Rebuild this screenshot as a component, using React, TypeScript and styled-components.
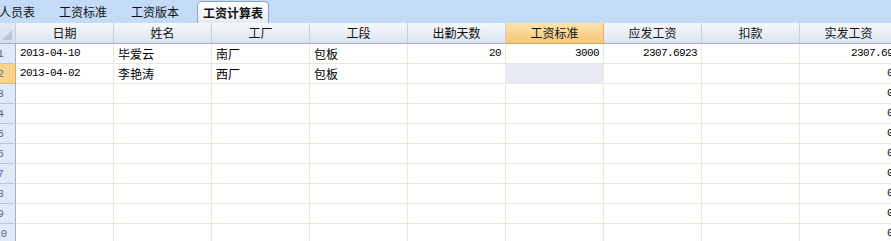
import styled, { createGlobalStyle } from "styled-components";

const Global = createGlobalStyle`
    html, body {
        margin: 0;
        padding: 0;
        background: #fff;
        overflow: hidden;
    }
    body {
        font-family: "Noto Sans CJK SC", "Liberation Sans", sans-serif;
        font-size: 12px;
        color: #000;
    }
`;

const Sheet = styled.div`
    margin-left: -14px;
    width: 920px;
`;

const TabBar = styled.div`
    display: flex;
    align-items: flex-end;
    height: 23px;
    padding-left: 1px;
    background: #c3dbf7;
`;

const Tab = styled.div<{ $active?: boolean }>`
    box-sizing: border-box;
    height: ${(p) => (p.$active ? "22px" : "23px")};
    padding: ${(p) => (p.$active ? "1px 5px 0" : "0 12px")};
    margin-left: ${(p) => (p.$active ? "6px" : "0")};
    display: flex;
    align-items: center;
    justify-content: center;
    font-weight: ${(p) => (p.$active ? "bold" : "normal")};
    font-size: 12px;
    line-height: 1;
    color: #111;
    ${(p) =>
        p.$active &&
        `
        width: 72px;
        border: 1px solid #8ea3bf;
        border-bottom: none;
        border-radius: 5px 5px 0 0;
        background: linear-gradient(#ffffff, #e4ebf5);
    `}
`;

const Row = styled.div`
    display: flex;
`;

const HeadCell = styled.div<{ $selected?: boolean; $w?: number }>`
    box-sizing: border-box;
    width: ${(p) => p.$w ?? 98}px;
    flex: none;
    height: 21px;
    display: flex;
    align-items: center;
    justify-content: center;
    border-right: 1px solid ${(p) => (p.$selected ? "#e9b463" : "#c3cfdd")};
    border-bottom: 1px solid ${(p) => (p.$selected ? "#e2a94e" : "#9db3cb")};
    background: ${(p) =>
        p.$selected
            ? "linear-gradient(#fce3ae, #f6c675)"
            : "linear-gradient(#f6f8fb, #dde5f0)"};
    font-size: 12px;
    line-height: 1;
    color: #111;
`;

const Corner = styled(HeadCell)`
    position: relative;
    background: linear-gradient(#e3ebf6, #d2deee);
    &::after {
        content: "";
        position: absolute;
        right: 3px;
        bottom: 3px;
        border-style: solid;
        border-width: 0 0 10px 10px;
        border-color: transparent transparent #b7c6d9 transparent;
    }
`;

const RowHead = styled.div<{ $selected?: boolean }>`
    box-sizing: border-box;
    width: 30px;
    flex: none;
    height: 20px;
    display: flex;
    align-items: center;
    justify-content: center;
    border-right: 1px solid ${(p) => (p.$selected ? "#e2a94e" : "#9db3cb")};
    border-bottom: 1px solid ${(p) => (p.$selected ? "#e9b463" : "#b9c9dc")};
    background: ${(p) => (p.$selected ? "#f8d38f" : "#e0e9f6")};
    color: #4b6c99;
    font-family: "Liberation Mono", monospace;
    font-size: 11px;
`;

const Cell = styled.div<{ $right?: boolean; $mono?: boolean; $active?: boolean }>`
    box-sizing: border-box;
    width: 98px;
    flex: none;
    height: 20px;
    display: flex;
    align-items: center;
    justify-content: ${(p) => (p.$right ? "flex-end" : "flex-start")};
    padding: 0 4px 0 4px;
    border-right: 1px solid #ebe8d9;
    border-bottom: 1px solid #ebe8d9;
    background: ${(p) => (p.$active ? "#e7eaf4" : "#fff")};
    font-family: ${(p) =>
        p.$mono ? `"Liberation Mono", monospace` : `"Noto Sans CJK SC", sans-serif`};
    font-size: ${(p) => (p.$mono ? "11px" : "12px")};
    letter-spacing: ${(p) => (p.$mono ? "-0.6px" : "0")};
    line-height: 1;
    white-space: nowrap;
    overflow: hidden;
`;

const columns = ["日期", "姓名", "工厂", "工段", "出勤天数", "工资标准", "应发工资", "扣款", "实发工资"];

type Rec = { date: string; name: string; factory: string; section: string; days: string; std: string; due: string; deduct: string; net: string };

const data: Rec[] = [
    { date: "2013-04-10", name: "毕爱云", factory: "南厂", section: "包板", days: "20", std: "3000", due: "2307.6923", deduct: "", net: "2307.69" },
    { date: "2013-04-02", name: "李艳涛", factory: "西厂", section: "包板", days: "", std: "", due: "", deduct: "", net: "0" },
];

const tabs = ["人员表", "工资标准", "工资版本", "工资计算表"];

export default function App() {
    const rows: Rec[] = [...data];
    while (rows.length < 10) {
        rows.push({ date: "", name: "", factory: "", section: "", days: "", std: "", due: "", deduct: "", net: "0" });
    }

    return (
        <>
            <Global />
            <Sheet>
                <TabBar>
                    {tabs.map((t, i) => (
                        <Tab key={t} $active={i === 3}>{t}</Tab>
                    ))}
                </TabBar>
                <Row>
                    <Corner $w={30} />
                    {columns.map((c) => (
                        <HeadCell key={c} $selected={c === "工资标准"}>{c}</HeadCell>
                    ))}
                </Row>
                {rows.map((r, i) => (
                    <Row key={i}>
                        <RowHead $selected={i === 1}>{i + 1}</RowHead>
                        <Cell $mono>{r.date}</Cell>
                        <Cell>{r.name}</Cell>
                        <Cell>{r.factory}</Cell>
                        <Cell>{r.section}</Cell>
                        <Cell $mono $right>{r.days}</Cell>
                        <Cell $mono $right $active={i === 1}>{r.std}</Cell>
                        <Cell $mono $right>{r.due}</Cell>
                        <Cell $mono $right>{r.deduct}</Cell>
                        <Cell $mono $right>{r.net}</Cell>
                    </Row>
                ))}
            </Sheet>
        </>
    );
}
